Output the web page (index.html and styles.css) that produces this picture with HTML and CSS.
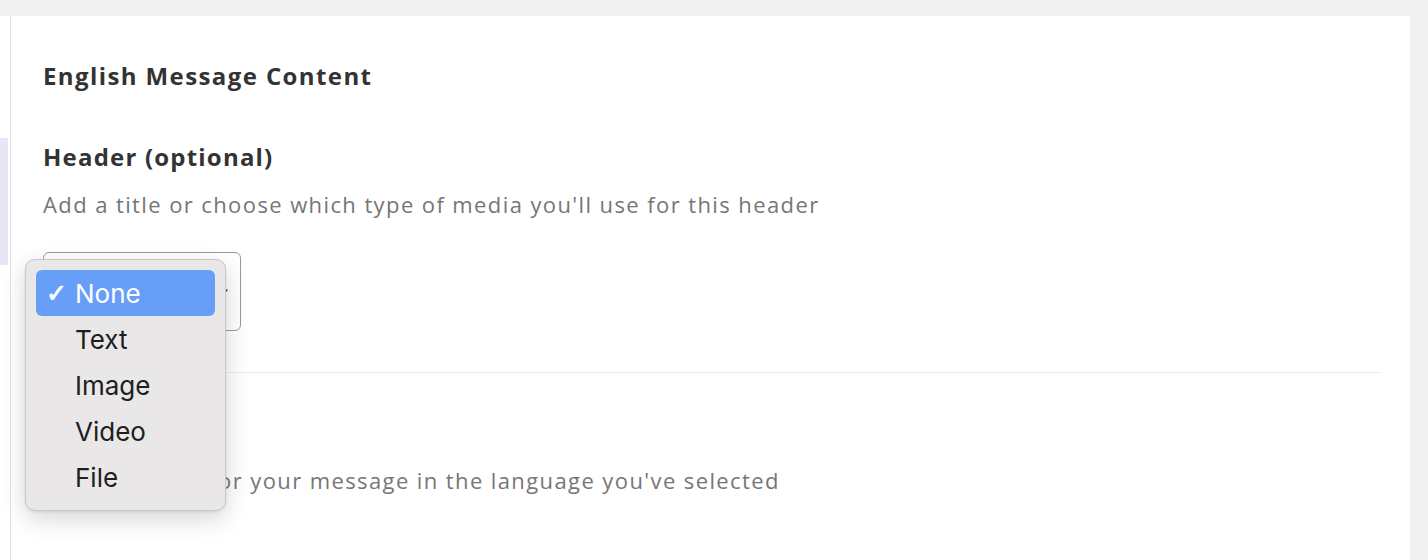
FILE: index.html
```html
<!DOCTYPE html>
<html lang="en">
<head>
<meta charset="utf-8">
<title>Message Content</title>
<link rel="stylesheet" href="styles.css">
</head>
<body>
<div class="app">
  <aside class="sidebar">
    <div class="side-item"></div>
  </aside>
  <main class="card">
    <h2 class="card-title">English Message Content</h2>

    <section class="field">
      <h3 class="field-title">Header (optional)</h3>
      <p class="field-help">Add a title or choose which type of media you'll use for this header</p>
      <div class="select-wrap">
        <div class="select">
          <span class="select-value">None</span>
          <svg class="chevron" width="14" height="14" viewBox="0 0 14 14"><path d="M3 5l4 4 4-4" fill="none" stroke="#333" stroke-width="1.5" stroke-linecap="round" stroke-linejoin="round"/></svg>
        </div>
        <ul class="menu">
          <li class="menu-item selected"><span class="check">✓</span>None</li>
          <li class="menu-item"><span class="check"></span>Text</li>
          <li class="menu-item"><span class="check"></span>Image</li>
          <li class="menu-item"><span class="check"></span>Video</li>
          <li class="menu-item"><span class="check"></span>File</li>
        </ul>
      </div>
    </section>

    <hr class="divider">

    <section class="field">
      <h3 class="field-title">Body</h3>
      <p class="field-help">Enter the text for your message in the language you've selected</p>
    </section>
  </main>
  <div class="gutter"></div>
</div>
</body>
</html>
```

FILE: styles.css
```css
* { box-sizing: border-box; }

html, body {
  margin: 0;
  padding: 0;
  height: 560px;
  overflow: hidden;
  background: #f1f1f1;
  font-family: "Open Sans", "Noto Sans", sans-serif;
  color: #333333;
}

.app {
  display: flex;
  padding-top: 16px;
  height: 560px;
}

.sidebar {
  width: 11px;
  flex: none;
  background: #ffffff;
  border-right: 1px solid #e4e4e4;
  padding-top: 122px;
}

.side-item {
  width: 8px;
  height: 127px;
  background: #e6e6f4;
}

.card {
  flex: 1;
  background: #ffffff;
  padding: 45px 30px 0 32px;
}

.gutter {
  width: 18px;
  flex: none;
  background: #f1f1f1;
}

.card-title,
.field-title {
  margin: 0;
  font-size: 24px;
  line-height: 30px;
  font-weight: 700;
  color: #333333;
}

.card-title { letter-spacing: 1.4px; }
.field-title { letter-spacing: 1.2px; }

.field {
  margin-top: 51px;
}

.field-help {
  margin: 17px 0 0;
  font-size: 22px;
  line-height: 30px;
  letter-spacing: 1.4px;
  color: #767676;
}

.select-wrap {
  position: relative;
  margin-top: 33px;
  width: 198px;
}

.select {
  display: flex;
  align-items: center;
  justify-content: space-between;
  height: 79px;
  padding: 0 10px 0 20px;
  border: 1px solid #9a9a9a;
  border-radius: 6px;
  background: #ffffff;
  font-size: 20px;
}

.chevron { flex: none; }

.menu {
  position: absolute;
  left: -18px;
  top: 7px;
  width: 201px;
  margin: 0;
  padding: 10px 10px;
  list-style: none;
  background: #e9e7e7;
  border: 1px solid #c9c7c7;
  border-radius: 10px;
  box-shadow: 0 8px 24px rgba(0, 0, 0, 0.16), 0 1px 3px rgba(0, 0, 0, 0.08);
  font-family: "Inter", "Liberation Sans", sans-serif;
  font-size: 26px;
  color: #1e1e1e;
}

.menu-item {
  display: flex;
  align-items: center;
  height: 46px;
  padding-left: 10px;
  border-radius: 6px;
}

.menu-item.selected {
  background: #679ef8;
  color: #ffffff;
}

.check {
  width: 29px;
  flex: none;
  font-family: "DejaVu Sans", sans-serif;
  font-size: 25px;
  -webkit-text-stroke: 0.8px #ffffff;
}

.divider {
  margin: 41px 0 0;
  border: 0;
  border-top: 1px solid #ebebeb;
}

.field + .divider + .field { margin-top: 45px; }
```
